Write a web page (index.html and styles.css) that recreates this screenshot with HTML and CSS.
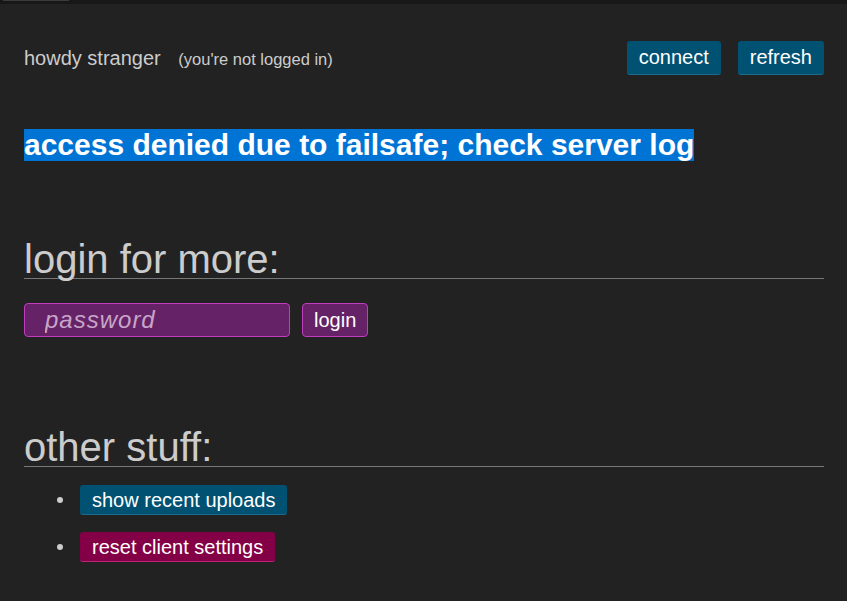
FILE: index.html
```html
<!DOCTYPE html>
<html>
<head>
    <meta charset="UTF-8">
    <title>login</title>
    <link rel="stylesheet" href="styles.css">
</head>
<body>

<div id="topbar"><span class="tab"></span></div>

<div id="wrap">
    <div id="hdr">
        <p class="greet">howdy stranger <span class="sub">(you're not logged in)</span></p>
        <div class="btns">
            <a class="btn blue" href="#">connect</a>
            <a class="btn blue" href="#">refresh</a>
        </div>
    </div>

    <h1 class="warn"><span>access denied due to failsafe; check server log</span></h1>

    <h2 class="sect sect-login">login for more:</h2>
    <form class="login">
        <input type="password" placeholder="password">
        <button type="button" class="btn purple">login</button>
    </form>

    <h2 class="sect sect-other">other stuff:</h2>
    <ul class="stuff">
        <li><a class="btn blue" href="#">show recent uploads</a></li>
        <li><a class="btn red" href="#">reset client settings</a></li>
    </ul>
</div>

</body>
</html>
```

FILE: styles.css
```css
html, body {
    margin: 0;
    padding: 0;
    background: #222;
    color: #ccc;
    font-family: "Liberation Sans", Arial, sans-serif;
}

#topbar {
    height: 4px;
    background: #181818;
    position: relative;
}
#topbar .tab {
    position: absolute;
    left: 3px;
    top: 0;
    width: 66px;
    height: 1px;
    background: #3a3a3a;
}

#wrap {
    padding: 0 23px 0 24px;
}

#hdr {
    display: flex;
    align-items: center;
    justify-content: space-between;
    padding-top: 37px;
}
.greet {
    margin: 0;
    font-size: 20px;
    color: #ccc;
}
.greet .sub {
    font-size: 16.5px;
    margin-left: 12px;
}
.btns {
    display: flex;
    gap: 17px;
}

.btn {
    display: inline-block;
    color: #fff;
    text-decoration: none;
    font-family: "Liberation Sans", Arial, sans-serif;
    font-size: 20px;
    line-height: 24px;
    border-radius: 3px;
    padding: 4px 12px 5px;
    border: 0;
    border-bottom: 1px solid;
    cursor: pointer;
}
.blue {
    background: #005172;
    border-color: #1b6b8a;
}
.red {
    background: #840046;
    border-color: #c0207a;
}
.purple {
    background: #662266;
    border: 1px solid #c03cc0;
    border-radius: 4px;
    padding: 4px 11px;
}

.warn {
    margin: 54px 0 0;
    font-size: 30px;
    line-height: 32px;
    color: #fff;
}
.warn span {
    display: inline-block;
    background: #0074d5;
}

.sect {
    margin: 0;
    font-weight: normal;
    font-size: 40px;
    line-height: 38px;
    color: #ccc;
    border-bottom: 1px solid #777;
}
.sect-login {
    margin-top: 79px;
}
.sect-other {
    margin-top: 91px;
}

.login {
    display: flex;
    gap: 12px;
    margin-top: 24px;
}
.login input {
    box-sizing: border-box;
    width: 266px;
    height: 34px;
    background: #662266;
    border: 1px solid #c03cc0;
    border-radius: 4px;
    padding: 0 20px;
    color: #fff;
    font-family: "Liberation Sans", Arial, sans-serif;
    font-size: 24px;
    font-style: italic;
    letter-spacing: 1px;
}
.login input::placeholder {
    color: #c8a5c8;
}

.stuff {
    list-style: none;
    margin: 18px 0 0;
    padding-left: 33px;
}
.stuff li {
    display: flex;
    align-items: center;
    gap: 17px;
    margin-bottom: 17px;
}
.stuff li::before {
    content: "";
    width: 6px;
    height: 6px;
    border-radius: 50%;
    background: #ccc;
}
.stuff .btn {
    padding: 3px 12px 2px;
}
```
